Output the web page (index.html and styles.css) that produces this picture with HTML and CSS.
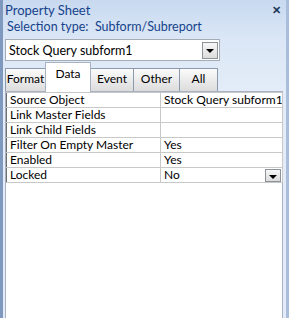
FILE: index.html
```html
<!DOCTYPE html>
<html lang="en">
<head>
    <meta charset="UTF-8">
    <title>Property Sheet</title>
    <link rel="stylesheet" href="styles.css">
</head>
<body>
    <div class="window">
        <div class="title-bar">
            <span class="title">Property Sheet</span>
            <span class="close">&#x2715;</span>
        </div>
        <div class="selection">Selection type:&nbsp; Subform/Subreport</div>
        <div class="combo">
            <span class="combo-text">Stock Query subform1</span>
            <span class="drop-btn"><span class="arrow"></span></span>
        </div>
        <div class="tabs">
            <div class="tab tab-format">Format</div>
            <div class="tab tab-data active">Data</div>
            <div class="tab tab-event">Event</div>
            <div class="tab tab-other">Other</div>
            <div class="tab tab-all">All</div>
        </div>
        <div class="panel">
            <table class="grid">
                <colgroup><col class="col-name"><col></colgroup>
                <tr><td class="name">Source Object</td><td class="value">Stock Query subform1</td></tr>
                <tr><td class="name">Link Master Fields</td><td class="value"></td></tr>
                <tr><td class="name">Link Child Fields</td><td class="value"></td></tr>
                <tr><td class="name">Filter On Empty Master</td><td class="value">Yes</td></tr>
                <tr><td class="name">Enabled</td><td class="value">Yes</td></tr>
                <tr><td class="name">Locked</td><td class="value value-drop">No<span class="drop-btn small"><span class="arrow"></span></span></td></tr>
            </table>
        </div>
    </div>
</body>
</html>
```

FILE: styles.css
```css
body {
    margin: 0;
    padding: 0;
    font-family: Lato, "Open Sans", sans-serif;
    font-size: 12px;
    color: #000;
}
.window {
    width: 289px;
    height: 318px;
    box-sizing: border-box;
    border-left: 3px solid #7f98bd;
    border-right: 3px solid #a9bedb;
    background: linear-gradient(to bottom, #c8d9ef 0px, #dbe7f6 40px, #e3ecf8 90px);
    display: flex;
    flex-direction: column;
    overflow: hidden;
}
.title-bar {
    height: 19px;
    display: flex;
    align-items: center;
    justify-content: space-between;
    padding: 0 5px 0 2px;
    color: #15428b;
    font-size: 13px;
}
.close {
    font-size: 11px;
    color: #1e395b;
    font-weight: bold;
}
.selection {
    height: 15px;
    line-height: 15px;
    padding-left: 4px;
    color: #15428b;
    font-size: 12.5px;
}
.combo {
    margin: 5px 0 0 2px;
    width: 213px;
    height: 20px;
    border: 1px solid #a5acb5;
    background: #fff;
    display: flex;
    align-items: center;
    justify-content: space-between;
    font-size: 12.5px;
}
.combo-text {
    padding-left: 3px;
}
.drop-btn {
    width: 16px;
    height: 17px;
    margin-right: 1px;
    border: 1px solid #8d939b;
    background: linear-gradient(to bottom, #f7f7f7, #dcdcdc);
    display: flex;
    align-items: center;
    justify-content: center;
    box-sizing: border-box;
}
.arrow {
    width: 0;
    height: 0;
    border-left: 4px solid transparent;
    border-right: 4px solid transparent;
    border-top: 4px solid #000;
    margin-top: 2px;
}
.tabs {
    display: flex;
    align-items: flex-end;
    margin: 1px 0 0 2px;
    height: 29px;
}
.tab {
    height: 23px;
    line-height: 20px;
    box-sizing: border-box;
    border: 1px solid #8b9aad;
    border-bottom: none;
    background: linear-gradient(to bottom, #fbfbfb, #dcdcdc);
    text-align: center;
    font-size: 12px;
    margin-right: -1px;
}
.tab.active {
    height: 30px;
    line-height: 22px;
    background: #fff;
    position: relative;
    z-index: 1;
    margin-bottom: -1px;
    border-color: #a7b3c3;
}
.tab-format { width: 41px; }
.tab-data { width: 46px; }
.tab-event { width: 44px; }
.tab-other { width: 47px; }
.tab-all { width: 39px; }
.panel {
    flex: 1;
    margin: 0 3px 0 2px;
    background: #fff;
    border: 1px solid #a7b3c3;
    border-bottom: none;
    padding: 0;
}
.grid {
    border-collapse: collapse;
    table-layout: fixed;
    width: 277px;
    font-size: 12px;
}
.col-name {
    width: 154px;
}
.grid td {
    height: 14px;
    padding: 0 0 0 3px;
    border: 1px solid #c8c8c8;
    white-space: nowrap;
    line-height: 14px;
    overflow: hidden;
}
.grid .name {
    border-left-color: #6d6d6d;
}
.value-drop {
    position: relative;
}
.drop-btn.small {
    position: absolute;
    right: 1px;
    top: 1px;
    width: 16px;
    height: 13px;
    margin: 0;
}
```
